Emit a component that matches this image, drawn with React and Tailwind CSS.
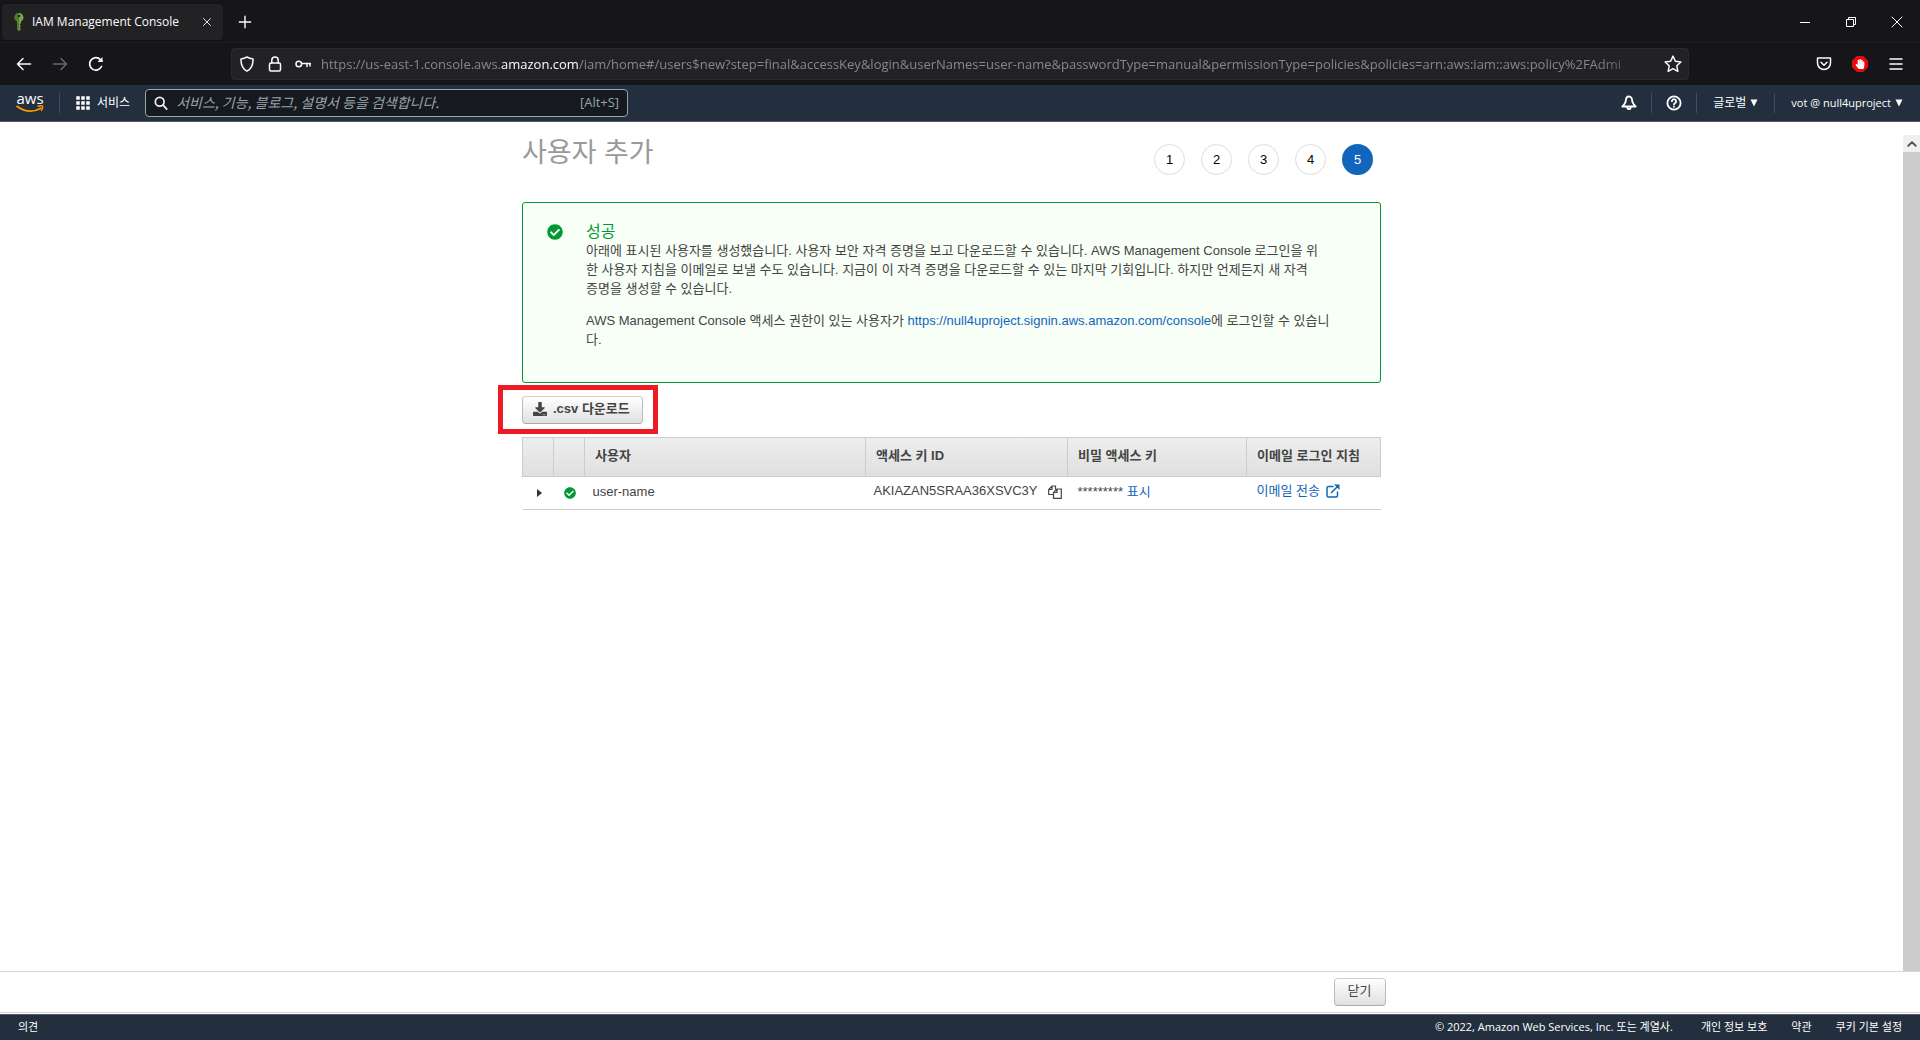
import React from "react";
import { FaCheckCircle, FaDownload, FaHandPaper } from "react-icons/fa";

const ui = "font-['Open_Sans','Noto_Sans_CJK_KR',sans-serif]";

function Stroke({ children, className = "", width = 1.5, box = "0 0 16 16" }) {
  return (
    <svg
      viewBox={box}
      className={className}
      fill="none"
      stroke="currentColor"
      strokeWidth={width}
      strokeLinecap="round"
      strokeLinejoin="round"
      aria-hidden="true"
    >
      {children}
    </svg>
  );
}

function TabStrip() {
  return (
    <div className="flex h-[43px] items-center border-b border-[#1e1d22] pt-0.5 pl-0.5">
      <div className="flex h-9 w-[221px] items-center rounded bg-[#222224] pr-2 pl-3 text-[#fbfbfe] shadow">
        <svg viewBox="0 0 10 18" className="h-[18px] w-2.5" aria-hidden="true">
          <path d="M5 0a4.500 4.500 0 0 0-2 8.500V16l2 2 2-2-1.500-1.500L7 13l-1.500-1.500L7 10V8.500A4.500 4.500 0 0 0 5 0z" fill="#7aa845" />
          <path d="M5 0a4.500 4.500 0 0 0-2 8.500V16l2 2z" fill="#4f7a30" />
          <circle cx="5" cy="3" r="1.300" fill="#1d2a14" />
        </svg>
        <span className="flex-1 pl-2 text-xs whitespace-nowrap">IAM Management Console</span>
        <button aria-label="탭 닫기" className="grid size-4 place-items-center">
          <Stroke className="size-2" width={1.8}><path d="M1 1l14 14M15 1L1 15" /></Stroke>
        </button>
      </div>
      <button aria-label="새 탭" className="ml-3.5 grid size-4 place-items-center text-[#fbfbfe]">
        <Stroke className="size-3.5" width={1.6}><path d="M8 1.500v13M1.500 8h13" /></Stroke>
      </button>
      <div className="ml-auto flex items-center gap-[34px] pr-[17px] text-white">
        <button aria-label="최소화" className="grid size-3 place-items-center"><span className="h-px w-2.5 bg-white" /></button>
        <button aria-label="이전 크기로" className="grid size-3 place-items-center">
          <svg viewBox="0 0 12 12" className="size-3" fill="none" stroke="currentColor" aria-hidden="true">
            <path d="M1.500 3.500h7v7h-7zM3.500 3.500v-2h7v7h-2" />
          </svg>
        </button>
        <button aria-label="닫기" className="grid size-3 place-items-center">
          <Stroke className="size-3" width={1} box="0 0 12 12"><path d="M1 1l10 10M11 1L1 11" /></Stroke>
        </button>
      </div>
    </div>
  );
}

function AddressBar() {
  return (
    <div className="flex h-[42px] items-center pr-4 pl-4 text-[#fbfbfe]">
      <button aria-label="뒤로"><Stroke className="size-4"><path d="M14.500 8H1.500M7 2.500L1.500 8L7 13.500" /></Stroke></button>
      <button aria-label="앞으로" className="ml-5 text-[#68676c]"><Stroke className="size-4"><path d="M1.500 8h13M9 2.500L14.500 8L9 13.500" /></Stroke></button>
      <button aria-label="새로 고침" className="ml-5">
        <Stroke className="size-4" width={1.7}><path d="M13.500 10.500A6.200 6.200 0 1 1 12.500 3.800L14 5.200" /><path d="M14.500 1v5h-5z" fill="currentColor" stroke="none" /></Stroke>
      </button>
      <div className="ml-[127px] flex h-8 min-w-0 flex-1 items-center rounded border border-[#2a2a2c] bg-[#222224] pr-1.5 pl-[7px]">
        <Stroke className="size-4 shrink-0"><path d="M8 1c2 1.200 4 1.700 6 1.900C14.200 8.500 12.500 13 8 15.200C3.500 13 1.800 8.500 2 2.900C4 2.700 6 2.200 8 1z" /></Stroke>
        <Stroke className="ml-3 size-4 shrink-0"><rect x="2.500" y="7" width="11" height="8" rx="1.500" /><path d="M4.800 7V4.200a3.200 3.200 0 0 1 6.400 0V7" /></Stroke>
        <Stroke className="ml-3 size-4 shrink-0"><circle cx="3.800" cy="8" r="2.800" /><path d="M6.600 7.500h8.800M12 7.500v3M15 7.500v2.500" /></Stroke>
        <div className="ml-2.5 min-w-0 flex-1 overflow-hidden pt-0.5 text-[13px] whitespace-nowrap text-[#88878b] [mask-image:linear-gradient(to_right,#000_calc(100%-64px),transparent)]">
          https://us-east-1.console.aws.<span className="font-medium text-[#fbfbfe]">amazon.com</span>
          /iam/home#/users$new?step=final&amp;accessKey&amp;login&amp;userNames=user-name&amp;passwordType=manual&amp;permissionType=policies&amp;policies=arn:aws:iam::aws:policy%2FAdmi
        </div>
        <button aria-label="북마크" className="ml-1.5">
          <Stroke className="size-[18px]" width={1.3}><path d="M8 1l2.100 4.600 4.900.6-3.600 3.400.9 5L8 12.200 3.700 14.600l.9-5L1 6.200l4.900-.6z" /></Stroke>
        </button>
      </div>
      <div className="ml-[127px] flex items-center gap-5">
        <button aria-label="Pocket"><Stroke className="size-4"><path d="M1.500 2h13v5a6.500 6.500 0 0 1-13 0zM5 6.200l3 3 3-3" /></Stroke></button>
        <button aria-label="광고 차단" className="grid size-4 place-items-center">
          <span className="grid size-4 place-items-center bg-[#e40d0d] [clip-path:polygon(30%_0,70%_0,100%_30%,100%_70%,70%_100%,30%_100%,0_70%,0_30%)]"><FaHandPaper className="size-2.5 text-white" /></span>
        </button>
        <button aria-label="메뉴"><Stroke className="size-4"><path d="M2 3h12M2 8h12M2 13h12" /></Stroke></button>
      </div>
    </div>
  );
}

function AwsNav() {
  return (
    <nav className="flex h-[37px] items-center border-b border-[#545b64] bg-[#232f3e] pr-[17px] pl-4 text-xs text-white">
      <a href="#home" aria-label="aws" className="flex w-7 flex-col items-center">
        <span className="h-3 text-[15px] leading-[10px] font-medium">aws</span>
        <svg viewBox="0 0 28 8" className="h-2 w-7" fill="none" stroke="#ff9900" strokeWidth="1.800" aria-hidden="true">
          <path d="M0.500 1c8 6 17 6.500 25 2" /><path d="M21.500 1.300c2.500-.6 4.500-.6 5 0s0 2.500-1.300 4.500" strokeWidth="1.400" />
        </svg>
      </a>
      <span className="ml-[15px] h-5 w-px bg-[#414d5c]" />
      <button className="ml-4 flex items-center gap-[7px] whitespace-nowrap">
        <svg viewBox="0 0 14 14" className="size-3.5" fill="currentColor" aria-hidden="true">
          <path d="M0 0h4v4H0zM5 0h4v4H5zM10 0h4v4h-4zM0 5h4v4H0zM5 5h4v4H5zM10 5h4v4h-4zM0 10h4v4H0zM5 10h4v4H5zM10 10h4v4h-4z" stroke="#232f3e" strokeWidth="0.500" />
        </svg>
        서비스
      </button>
      <label className="ml-[15px] flex h-7 w-[483px] items-center rounded-sm border border-[#95a5a6] bg-[#16191f] px-2 text-[#95a5a6]">
        <Stroke className="size-3.5 shrink-0 text-[#eaeded]" width={2}><circle cx="6.500" cy="6.500" r="5" /><path d="M10.500 10.500l4 4.500" /></Stroke>
        <input aria-label="검색" className="ml-2 min-w-0 flex-1 bg-transparent pb-0.5 font-['Noto_Sans_CJK_KR',sans-serif] text-sm italic outline-none placeholder:text-[#95a5a6]" placeholder="서비스, 기능, 블로그, 설명서 등을 검색합니다." />
        <span className="text-[13px]">[Alt+S]</span>
      </label>
      <div className="ml-auto flex items-center">
        <button aria-label="알림"><Stroke className="size-4" width={1.8}><path d="M8 1.500C5.900 1.500 4.900 3.500 4.900 5.300c0 2.600-1.200 3.700-3.600 6.200h13.400c-2.400-2.500-3.600-3.600-3.600-6.200C11.100 3.500 10.100 1.500 8 1.500zM6.300 12a1.700 2.200 0 0 0 3.400 0" /></Stroke></button>
        <span className="ml-3.5 h-5 w-px bg-[#414d5c]" />
        <button aria-label="도움말" className="ml-3.5"><Stroke className="size-4" width={1.8}><circle cx="8" cy="8" r="6.600" /><path d="M5.900 6.200a2.100 2.100 0 1 1 3.200 1.900c-.8.5-1.100.8-1.100 1.500M8 11.700v.1" /></Stroke></button>
        <span className="ml-3.5 h-5 w-px bg-[#414d5c]" />
        <button className="ml-4 flex items-center gap-1">글로벌 <Caret /></button>
        <span className="ml-4 h-5 w-px bg-[#414d5c]" />
        <button className="ml-4 flex items-center text-[11px] font-medium">vot @ null4uproject <span className="ml-1"><Caret /></span></button>
      </div>
    </nav>
  );
}

function Caret() {
  return <svg viewBox="0 0 8 8" className="size-2" aria-hidden="true"><path d="M0.500 0.500h7L4 7.500z" fill="currentColor" /></svg>;
}

const btn =
  "flex h-7 items-center rounded-sm border border-t-[#cfcfcf] border-r-[#bbb] border-b-[#aaa] border-l-[#bbb] bg-gradient-to-b from-white to-[#e0e0e0] pb-0.5 text-[13px] text-[#444]";

const th = "h-[39px] border border-[#ccc] px-2.5 pb-0.5 text-left font-bold";

function CredentialTable() {
  return (
    <table className="mt-[3px] w-full table-fixed border-collapse text-[13px]">
      <colgroup>
        <col className="w-[31px]" /><col className="w-[31px]" /><col /><col className="w-[202px]" /><col className="w-[179px]" /><col className="w-[134px]" />
      </colgroup>
      <thead className="bg-gradient-to-b from-[#eee] to-[#dfdfdf]">
        <tr>
          <th className={th} /><th className={th} /><th className={th}>사용자</th><th className={th}>액세스 키 ID</th><th className={th}>비밀 액세스 키</th><th className={th}>이메일 로그인 지침</th>
        </tr>
      </thead>
      <tbody>
        <tr className="h-[33px] border-b border-[#ccc]">
          <td>
            <button aria-label="펼치기" className="ml-3.5 block"><svg viewBox="0 0 5 8" className="h-2 w-[5px]" aria-hidden="true"><path d="M0 0l5 4-5 4z" fill="#333" /></svg></button>
          </td>
          <td><FaCheckCircle className="ml-2.5 size-3 text-[#093]" /></td>
          <td className="px-2 pb-0.5">user-name</td>
          <td className="px-2 pb-1">
            <div className="flex items-center justify-between whitespace-nowrap">
              AKIAZAN5SRAA36XSVC3Y
              <button aria-label="복사" className="-mr-0.5 pt-0.5">
                <Stroke className="size-3.5" width={1.2} box="0 0 14 14"><path d="M5 9.500H.7V4.500L4 1h3.500v3M4 1v3.500H.7M5.500 13.300V7.500L9 4h4.300v9.300zM9 4v3.500H5.500" strokeLinejoin="miter" /></Stroke>
              </button>
            </div>
          </td>
          <td className="px-2.5 pb-0.5"><span>*********</span> <a href="#show" className="text-[#1166bb]">표시</a></td>
          <td className="px-2.5 pb-1">
            <a href="#mail" className="flex items-center gap-1.5 text-[#1166bb]">
              이메일 전송
              <Stroke className="size-3.5" width={1.5} box="0 0 14 14"><path d="M7 2.500H2.500A1.500 1.500 0 0 0 1 4v7.500A1.500 1.500 0 0 0 2.500 13H10a1.500 1.500 0 0 0 1.500-1.500V8M5.500 8.500l6-6" /><path d="M8 .5h5.500v5.500z" fill="currentColor" stroke="none" /></Stroke>
            </a>
          </td>
        </tr>
      </tbody>
    </table>
  );
}

function Content() {
  return (
    <main className="min-w-0 flex-1 overflow-hidden">
      <div className="mx-auto max-w-[859px]">
        <div className="flex h-20 items-start justify-between pt-3 pr-2">
          <h1 className="text-[27px] leading-[38px] text-[#999]">사용자 추가</h1>
          <ol className="mt-2.5 flex gap-4 text-[13px] text-black">
            {[1, 2, 3, 4].map((n) => <li key={n} className="grid size-[31px] place-items-center rounded-full border border-[#ddd]">{n}</li>)}
            <li aria-current="step" className="grid size-[31px] place-items-center rounded-full bg-[#1166bb] text-white">5</li>
          </ol>
        </div>
        <section className="flex h-[181px] rounded-[3px] border border-[#093] bg-[#f7fff7] pt-5 pr-6 pl-6">
          <FaCheckCircle className="mt-px size-4 shrink-0 text-[#093]" />
          <div className="ml-[23px] min-w-0 text-[13px] leading-[19px]">
            <h2 className="text-base leading-[18px] text-[#093]">성공</h2>
            <p>아래에 표시된 사용자를 생성했습니다. 사용자 보안 자격 증명을 보고 다운로드할 수 있습니다. AWS Management Console 로그인을 위<br />한 사용자 지침을 이메일로 보낼 수도 있습니다. 지금이 이 자격 증명을 다운로드할 수 있는 마지막 기회입니다. 하지만 언제든지 새 자격<br />증명을 생성할 수 있습니다.</p>
            <p className="mt-[13px]">AWS Management Console 액세스 권한이 있는 사용자가 <a href="#console" className="text-[#1166bb]">https://null4uproject.signin.aws.amazon.com/console</a>에 로그인할 수 있습니<br />다.</p>
          </div>
        </section>
        <div className="mt-0.5 -ml-6 w-fit border-[5px] border-[#ed1c24] pt-1.5 pr-2.5 pb-[5px] pl-[19px]">
          <button className={`${btn} gap-1.5 pr-3 pl-2.5 font-bold`}><FaDownload className="size-3.5" />.csv 다운로드</button>
        </div>
        <CredentialTable />
      </div>
    </main>
  );
}

export default function App() {
  return (
    <div className="flex h-screen flex-col bg-white font-['Liberation_Sans','Noto_Sans_CJK_KR',sans-serif] text-[#444]">
      <header className={`bg-[#16151a] ${ui}`}>
        <TabStrip />
        <AddressBar />
        <AwsNav />
      </header>
      <div className="flex min-h-0 flex-1">
        <Content />
        <div className="mt-[13px] flex w-[17px] flex-col bg-[#cdcdcd]" aria-hidden="true">
          <span className="grid h-[17px] place-items-center bg-[#f0f0f0] text-[#505050]"><Stroke className="size-2.5" width={3}><path d="M2 11l6-6 6 6" /></Stroke></span>
        </div>
      </div>
      <div className="flex h-[42px] justify-center border-y border-[#d5d5d5] pt-1.5 pr-[17px]">
        <div className="flex w-[868px] justify-end"><button className={`${btn} px-[13px]`}>닫기</button></div>
      </div>
      <footer className={`mt-px flex h-[26px] items-center border-t border-[#545b64] bg-[#232f3e] px-[18px] pb-px text-[11px] text-white ${ui}`}>
        <a href="#feedback">의견</a>
        <span className="ml-auto"><span className="font-medium">© 2022, Amazon Web Services, Inc.</span> 또는 계열사.</span>
        <a href="#privacy" className="ml-7">개인 정보 보호</a>
        <a href="#terms" className="ml-6">약관</a>
        <a href="#cookies" className="ml-6">쿠키 기본 설정</a>
      </footer>
    </div>
  );
}
